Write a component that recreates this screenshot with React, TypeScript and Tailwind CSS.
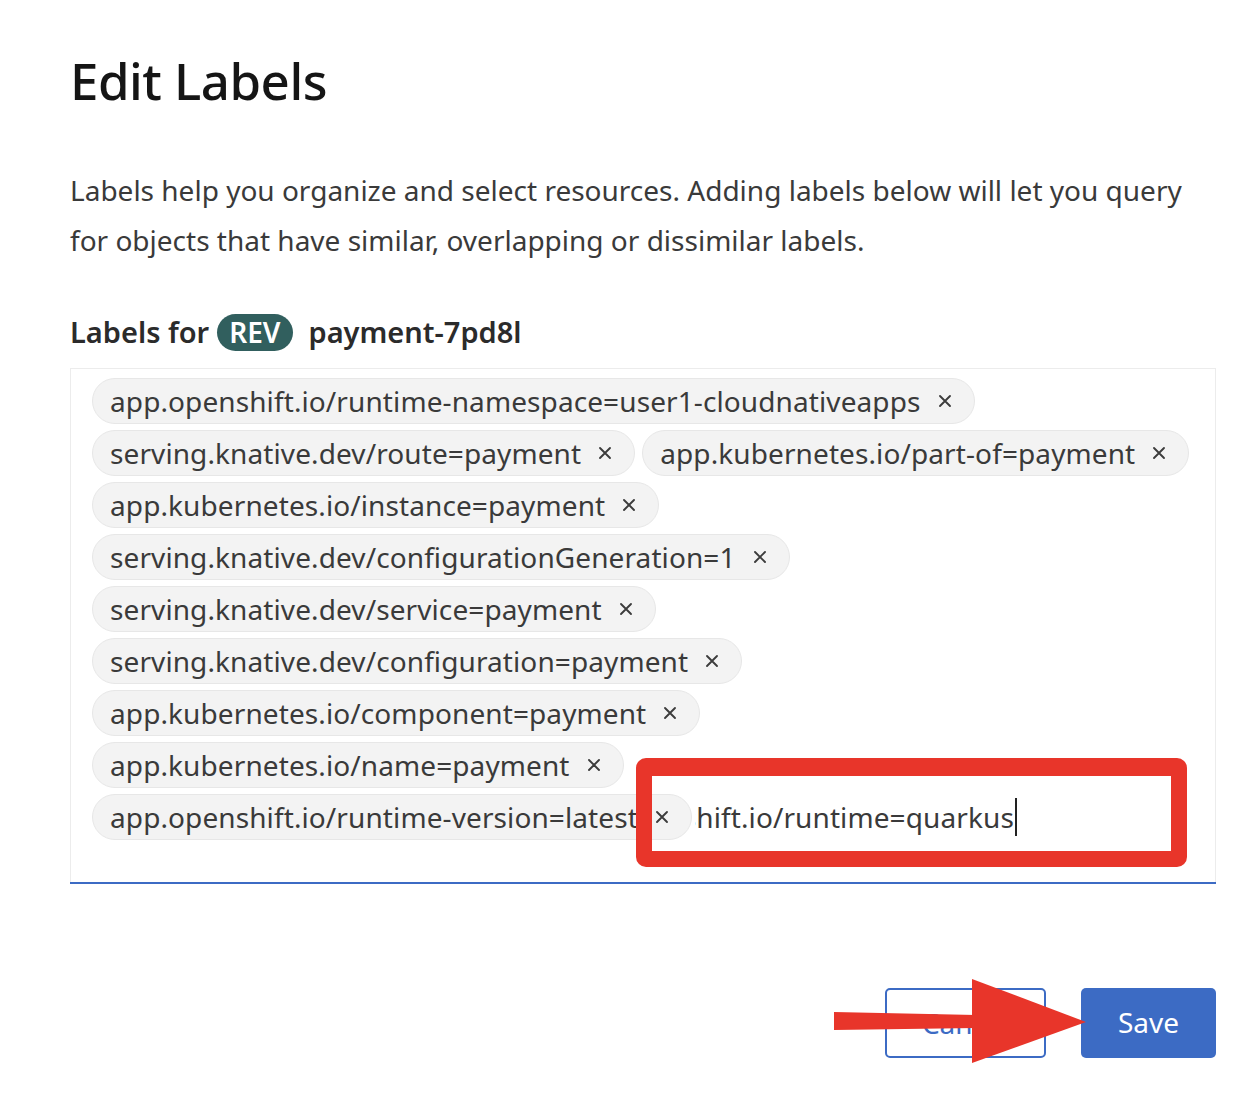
import React from 'react'

const rows: string[][] = [
  ['app.openshift.io/runtime-namespace=user1-cloudnativeapps'],
  ['serving.knative.dev/route=payment', 'app.kubernetes.io/part-of=payment'],
  ['app.kubernetes.io/instance=payment'],
  ['serving.knative.dev/configurationGeneration=1'],
  ['serving.knative.dev/service=payment'],
  ['serving.knative.dev/configuration=payment'],
  ['app.kubernetes.io/component=payment'],
  ['app.kubernetes.io/name=payment'],
]

function CloseIcon() {
  return (
    <svg width="14" height="14" viewBox="0 0 14 14" className="shrink-0">
      <path d="M2 2 L12 12 M12 2 L2 12" stroke="#3c3c3c" strokeWidth="1.9" strokeLinecap="round" />
    </svg>
  )
}

function Chip({ text }: { text: string }) {
  return (
    <div className="flex h-[46px] shrink-0 items-center gap-[17px] rounded-full border border-[#e7e7e7] bg-[#f3f3f3] pl-[17px] pr-[22px]">
      <span className="whitespace-nowrap text-[28px] leading-none tracking-[0.1px] text-[#3a3a3a]">{text}</span>
      <CloseIcon />
    </div>
  )
}

export default function App() {
  return (
    <div
      className="relative h-[1094px] w-[1260px] overflow-hidden bg-white pl-[70px] pr-[44px]"
      style={{ fontFamily: '"Noto Sans", Arial, sans-serif' }}
    >
      <h1 className="pt-[50px] text-[51px] font-medium leading-[60px] tracking-[-0.5px] text-[#151515]">
        Edit Labels
      </h1>

      <p className="mt-[55px] whitespace-nowrap text-[28px] leading-[50px] text-[#3a3a3a]">
        Labels help you organize and select resources. Adding labels below will let you query
        <br />
        for objects that have similar, overlapping or dissimilar labels.
      </p>

      <div className="mt-[47px] flex h-[40px] items-center text-[29px] font-semibold text-[#2b2b2b]">
        <span>Labels for</span>
        <span className="ml-[8px] flex h-[37px] items-center rounded-full bg-[#315f5e] px-[12px] text-[28px] font-semibold leading-none text-white">
          REV
        </span>
        <span className="ml-[16px]">payment-7pd8l</span>
      </div>

      {/* label editor */}
      <div className="mt-[16px] border border-b-0 border-[#ececec] pb-[42px] pl-[21px] pr-[20px] pt-[9px]">
        <div className="flex flex-col gap-[6px]">
          {rows.map((row, i) => (
            <div key={i} className="flex gap-[7px]">
              {row.map((t) => (
                <Chip key={t} text={t} />
              ))}
            </div>
          ))}
          <div className="flex h-[46px] items-center gap-[3px]">
            <Chip text="app.openshift.io/runtime-version=latest" />
            <div className="flex w-[322px] items-center justify-end overflow-hidden">
              <span className="whitespace-nowrap text-[28px] leading-none tracking-[0.1px] text-[#3a3a3a]">
                app.openshift.io/runtime=quarkus
              </span>
              <span className="ml-[1px] h-[38px] w-[2px] shrink-0 bg-[#222]" />
            </div>
          </div>
        </div>
      </div>
      <div className="h-[2px] bg-[#3c6bc4]" />

      <div className="mt-[104px] flex justify-end gap-[35px]">
        <button className="h-[70px] w-[161px] rounded-[5px] border-2 border-[#3c6bc4] text-[28px] text-[#3c6bc4]">
          Cancel
        </button>
        <button className="h-[70px] w-[135px] rounded-[5px] bg-[#3c6bc4] pb-[2px] text-[28px] text-white">
          Save
        </button>
      </div>

      {/* annotation overlays */}
      <div className="absolute left-[636px] top-[758px] h-[109px] w-[551px] rounded-[10px] border-[16px] border-t-[18px] border-[#e8352a]" />
      <svg className="absolute left-[830px] top-[975px]" width="260" height="92" viewBox="0 0 260 92">
        <polygon points="4,37 146,40 146,53 4,55" fill="#e8352a" />
        <polygon points="142,4 256,47 142,88" fill="#e8352a" />
      </svg>
    </div>
  )
}
